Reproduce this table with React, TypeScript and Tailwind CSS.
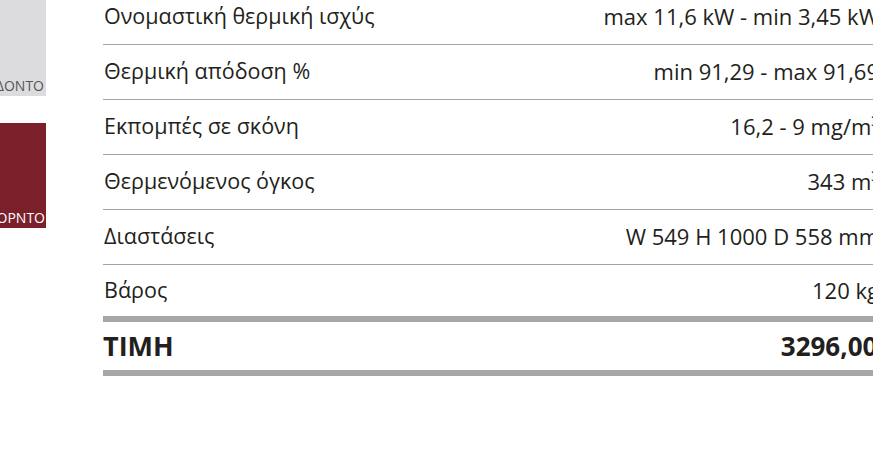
import React from 'react';

const specs = [
  { label: 'Ονομαστική θερμική ισχύς', value: 'max 11,6 kW - min 3,45 kW' },
  { label: 'Θερμική απόδοση %', value: 'min 91,29 - max 91,69' },
  { label: 'Εκπομπές σε σκόνη', value: '16,2 - 9 mg/m³' },
  { label: 'Θερμενόμενος όγκος', value: '343 m³' },
  { label: 'Διαστάσεις', value: 'W 549 H 1000 D 558 mm' },
];

const App = () => {
  return (
    <div className="w-[873px] h-[453px] overflow-hidden bg-white font-['Open_Sans',sans-serif] text-[#231f20]">
      <div className="flex mt-[-9px]">
        <div className="flex flex-col gap-[27px] w-[46px] shrink-0">
          <div className="h-[105px] bg-[#dcdcde] flex items-end justify-end overflow-hidden pr-[2px] pb-[1px]">
            <span className="text-[14px] text-[#555555] whitespace-nowrap leading-[18px]">ΕΛΕΦΑΝΤΟΔΟΝΤΟ</span>
          </div>
          <div className="h-[105px] bg-[#7b1f2b] flex items-end justify-end overflow-hidden pr-[1px] pb-[1px]">
            <span className="text-[14px] text-white whitespace-nowrap leading-[18px]">ΜΠΟΡΝΤΟ</span>
          </div>
        </div>

        <div className="ml-[57px] mt-[-1px] w-[776px] shrink-0 text-[21.5px]">
          {specs.map((row) => (
            <div
              key={row.label}
              className="h-[55px] flex items-center justify-between border-b border-[#a3a3a3] pb-[1px] pl-[1px]"
            >
              <span>{row.label}</span>
              <span className="whitespace-nowrap text-[22px]">{row.value}</span>
            </div>
          ))}
          <div className="h-[57px] flex items-center justify-between border-b-[6px] border-[#a7a7a9] pl-[1px]">
            <span>Βάρος</span>
            <span className="text-[22px]">120 kg</span>
          </div>
          <div className="h-[54px] flex items-center justify-between border-b-[6px] border-[#a7a7a9] font-bold">
            <span className="text-[27px]">ΤΙΜΗ</span>
            <span className="text-[26px] whitespace-nowrap mr-[-20px]">3296,00 €</span>
          </div>
        </div>
      </div>
    </div>
  );
};

export default App;
